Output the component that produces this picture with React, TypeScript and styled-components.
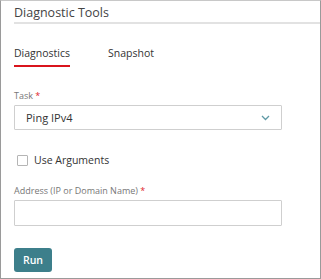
import * as React from 'react';
import styled, { createGlobalStyle } from 'styled-components';

const GlobalStyle = createGlobalStyle`
  html, body {
    margin: 0;
    padding: 0;
    background: #fff;
  }
  body {
    font-family: 'Open Sans', 'Liberation Sans', sans-serif;
    color: #333;
  }
`;

const Panel = styled.div`
  box-sizing: border-box;
  width: 321px;
  height: 279px;
  border: 1px solid #9a9a9a;
  border-top-color: #c8c8c8;
  padding: 0 38px 0 13px;
  background: #fff;
`;

const Title = styled.div`
  font-size: 12.5px;
  color: #444;
  line-height: 18px;
  padding-top: 3px;
  padding-bottom: 0;
  margin-right: -38px;
  border-bottom: 2px solid #e2e2e2;
`;

const Tabs = styled.div`
  display: flex;
  gap: 38px;
  margin-top: 21px;
`;

const Tab = styled.div<{ active?: boolean }>`
  font-size: 10.5px;
  color: #333;
  line-height: 16px;
  padding-bottom: 4px;
  border-bottom: 2px solid ${({ active }) => (active ? '#d9141c' : 'transparent')};
`;

const Field = styled.div<{ top: number }>`
  margin-top: ${({ top }) => top}px;
`;

const Label = styled.div`
  font-size: 9px;
  color: #777;
  line-height: 12px;
  margin-bottom: 3px;
`;

const Star = styled.span`
  color: #e0262e;
`;

const SelectBox = styled.div`
  box-sizing: border-box;
  height: 25px;
  border: 1px solid #cfcfcf;
  border-radius: 1px;
  display: flex;
  align-items: center;
  justify-content: space-between;
  padding: 0 11px 0 11px;
  font-size: 11px;
  color: #333;
`;

const Chevron = styled.svg`
  width: 9px;
  height: 6px;
`;

const CheckRow = styled.label`
  display: flex;
  align-items: center;
  gap: 6px;
  margin-top: 23px;
  margin-left: 3px;
  font-size: 10.5px;
  color: #333;
`;

const Box = styled.span`
  box-sizing: border-box;
  width: 11px;
  height: 11px;
  border: 1px solid #b5b5b5;
  border-radius: 1px;
`;

const TextBox = styled.div`
  box-sizing: border-box;
  height: 26px;
  border: 1px solid #cfcfcf;
  border-radius: 1px;
`;

const RunButton = styled.button`
  margin-top: 22px;
  width: 38px;
  height: 24px;
  border: none;
  border-radius: 3px;
  background: #3d7f8b;
  color: #fff;
  font-family: 'Open Sans', 'Liberation Sans', sans-serif;
  font-weight: 600;
  font-size: 10.5px;
  padding: 0;
`;

const App = () => (
  <>
    <GlobalStyle />
    <Panel>
      <Title>Diagnostic Tools</Title>
      <Tabs>
        <Tab active>Diagnostics</Tab>
        <Tab>Snapshot</Tab>
      </Tabs>
      <Field top={23}>
        <Label>
          Task <Star>*</Star>
        </Label>
        <SelectBox>
          <span>Ping IPv4</span>
          <Chevron viewBox="0 0 9 6">
            <path d="M1 1l3.5 3.5L8 1" fill="none" stroke="#5f9aa6" strokeWidth="1.3" />
          </Chevron>
        </SelectBox>
      </Field>
      <CheckRow>
        <Box />
        Use Arguments
      </CheckRow>
      <Field top={18}>
        <Label>
          Address (IP or Domain Name) <Star>*</Star>
        </Label>
        <TextBox />
      </Field>
      <RunButton>Run</RunButton>
    </Panel>
  </>
);

export default App;
